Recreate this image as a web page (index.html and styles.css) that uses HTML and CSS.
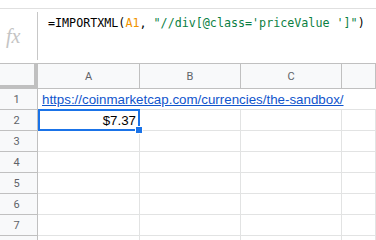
FILE: index.html
```html
<!DOCTYPE html>
<html lang="en">
<head>
  <meta charset="UTF-8">
  <title>Sheet</title>
  <link rel="stylesheet" href="styles.css">
</head>
<body>

  <!-- Barre de formule -->
  <div class="top-strip"></div>
  <div class="formula-bar">
    <div class="fx">fx</div>
    <div class="formula">=IMPORTXML(<span class="ref">A1</span>, <span class="str">"//div[@class='priceValue ']"</span>)</div>
  </div>

  <!-- Grille -->
  <div class="sheet">
    <div class="corner"></div>
    <div class="col-head">A</div>
    <div class="col-head">B</div>
    <div class="col-head">C</div>
    <div class="col-head"></div>

    <!-- le lien déborde sur B, C et D -->
    <div class="row-head">1</div>
    <div class="cell overflow"><a href="#" class="link">https://coinmarketcap.com/currencies/the-sandbox/</a></div>

    <div class="row-head">2</div>
    <div class="cell num selected">$7.37</div>
    <div class="cell"></div>
    <div class="cell"></div>
    <div class="cell"></div>

    <div class="row-head">3</div>
    <div class="cell"></div><div class="cell"></div><div class="cell"></div><div class="cell"></div>

    <div class="row-head">4</div>
    <div class="cell"></div><div class="cell"></div><div class="cell"></div><div class="cell"></div>

    <div class="row-head">5</div>
    <div class="cell"></div><div class="cell"></div><div class="cell"></div><div class="cell"></div>

    <div class="row-head">6</div>
    <div class="cell"></div><div class="cell"></div><div class="cell"></div><div class="cell"></div>

    <div class="row-head">7</div>
    <div class="cell"></div><div class="cell"></div><div class="cell"></div><div class="cell"></div>

    <div class="row-head"></div>
    <div class="cell"></div><div class="cell"></div><div class="cell"></div><div class="cell"></div>
  </div>

</body>
</html>
```

FILE: styles.css
```css
body {
  margin: 0;
  padding: 0;
  background: #fff;
  font-family: 'Liberation Sans', Arial, sans-serif;
  overflow: hidden;
}

.top-strip {
  height: 9px;
  border-bottom: 1px solid #e0e0e0;
  box-sizing: border-box;
}

.formula-bar {
  display: flex;
  height: 55px;
  border-bottom: 1px solid #c0c0c0;
  box-sizing: border-box;
}

.fx {
  width: 38px;
  margin: 3px 0 3px 0;
  border-right: 1px solid #c7c7c7;
  box-sizing: border-box;
  font-family: 'Liberation Serif', serif;
  font-style: italic;
  font-size: 20px;
  color: #c4c4c4;
  padding-left: 6px;
  padding-top: 13px;
}

.formula {
  padding: 6px 0 0 10px;
  font-family: 'DejaVu Sans Mono', monospace;
  font-size: 11.7px;
  line-height: 16px;
  color: #000;
  white-space: nowrap;
}

.formula .ref {
  color: #f09300;
}

.formula .str {
  color: #0b8043;
}

.sheet {
  display: grid;
  grid-template-columns: 38px 102px 101px 101px 1fr;
  grid-template-rows: 25px;
  grid-auto-rows: 21px;
}

.sheet > div {
  box-sizing: border-box;
}

.corner {
  background: #f8f9fa;
  border-right: 4px solid #c0c0c0;
  border-bottom: 4px solid #c0c0c0;
}

.col-head {
  background: #f8f9fa;
  border-right: 1px solid #c0c0c0;
  border-bottom: 1px solid #c0c0c0;
  font-family: Roboto, sans-serif;
  font-size: 11px;
  color: #5f6368;
  display: flex;
  align-items: center;
  justify-content: center;
}

.row-head {
  background: #f8f9fa;
  border-right: 1px solid #c0c0c0;
  border-bottom: 1px solid #c0c0c0;
  font-family: Roboto, sans-serif;
  font-size: 11px;
  color: #5f6368;
  display: flex;
  align-items: center;
  justify-content: center;
  padding-right: 4px;
}

.cell {
  border-right: 1px solid #e2e3e3;
  border-bottom: 1px solid #e2e3e3;
  font-size: 13.33px;
  line-height: 16px;
  padding: 3px 3px 0 4px;
  white-space: nowrap;
}

.overflow {
  grid-column: span 4;
  border-right: none;
}

.link {
  color: #1155cc;
  text-decoration: underline;
}

.num {
  text-align: right;
  color: #000;
}

.selected {
  position: relative;
}

.selected::after {
  content: '';
  position: absolute;
  top: -1px;
  left: 0;
  right: -1px;
  bottom: -1px;
  border: 2px solid #1a73e8;
}

.selected::before {
  content: '';
  position: absolute;
  right: -4px;
  bottom: -4px;
  width: 6px;
  height: 6px;
  background: #1a73e8;
  border: 1px solid #fff;
  z-index: 2;
}
```
